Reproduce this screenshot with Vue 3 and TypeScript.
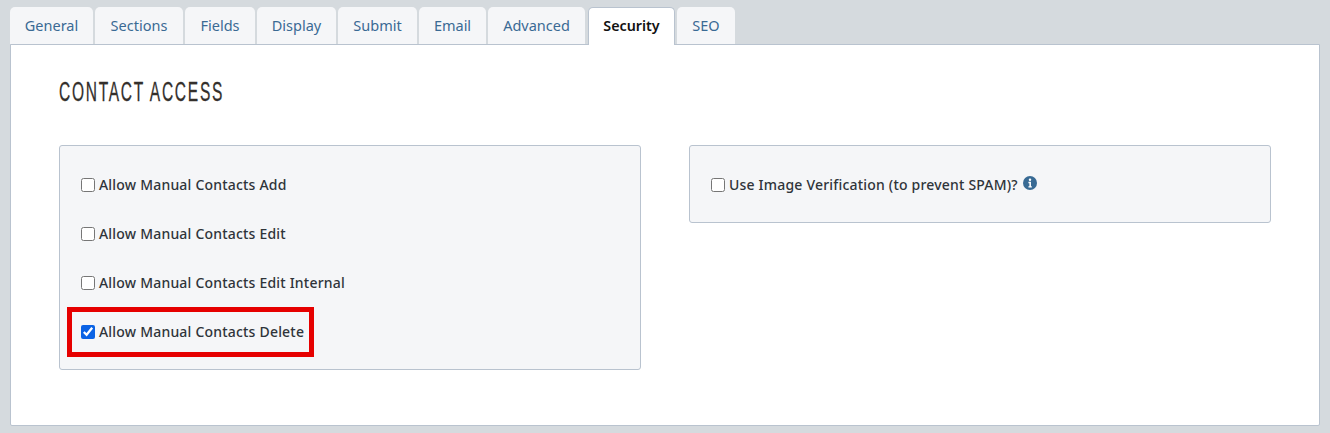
<script setup lang="ts">
const tabs = ['General', 'Sections', 'Fields', 'Display', 'Submit', 'Email', 'Advanced', 'Security', 'SEO']
const activeTab = 'Security'

const contactRules = [
  { label: 'Allow Manual Contacts Add', checked: false },
  { label: 'Allow Manual Contacts Edit', checked: false },
  { label: 'Allow Manual Contacts Edit Internal', checked: false },
  { label: 'Allow Manual Contacts Delete', checked: true, marked: true },
]
</script>

<template>
  <div class="page">
    <ul class="tabs">
      <li v-for="tab in tabs" :key="tab" class="tab" :class="{ active: tab === activeTab }">{{ tab }}</li>
    </ul>
    <main class="panel">
      <h2 class="title"><span>CONTACT ACCESS</span></h2>
      <div class="columns">
        <section class="box">
          <label v-for="rule in contactRules" :key="rule.label" class="row">
            <input type="checkbox" :checked="rule.checked" />
            <span>{{ rule.label }}</span>
            <i v-if="rule.marked" class="marker"></i>
          </label>
        </section>
        <section class="box short">
          <label class="row">
            <input type="checkbox" />
            <span>Use Image Verification (to prevent SPAM)?</span>
            <svg class="info" viewBox="0 0 16 16" width="14" height="14">
              <circle cx="8" cy="8" r="8" fill="#386a94" />
              <circle cx="8" cy="4.3" r="1.4" fill="#fff" />
              <path d="M6.2 6.7h2.9v5h1v1.5H6.2v-1.5h1.1V8.2H6.2z" fill="#fff" />
            </svg>
          </label>
        </section>
      </div>
    </main>
  </div>
</template>

<style>
html,
body {
  margin: 0;
  background: #d5dade;
}
</style>

<style scoped>
.page {
  height: 433px;
  box-sizing: border-box;
  padding: 7px 10px 0;
  font-family: 'Noto Sans', 'Open Sans', sans-serif;
  overflow: hidden;
}

.tabs {
  display: grid;
  grid-template-columns: 83px 88px 70px 79px 79px 67px 97px 88px 58px;
  gap: 2px;
  list-style: none;
  margin: 0;
  padding: 0;
  height: 37px;
}

.tab {
  box-sizing: border-box;
  height: 37px;
  line-height: 37px;
  text-align: center;
  font-size: 14.5px;
  color: #3a6a94;
  background: #f5f6f8;
  border-radius: 5px 5px 0 0;
}

.tab.active {
  position: relative;
  z-index: 1;
  height: 38px;
  line-height: 36px;
  margin-left: 1px;
  font-size: 14.3px;
  color: #111;
  font-weight: 600;
  background: #fff;
  border: 1px solid #b9c3cf;
  border-bottom: 0;
}

.panel {
  box-sizing: border-box;
  width: 1310px;
  height: 382px;
  padding: 0 48px;
  background: #fff;
  border: 1px solid #b9c3cf;
  border-radius: 0 0 2px 2px;
}

.title {
  margin: 0;
  padding: 32px 0 37px;
  height: 100px;
  box-sizing: border-box;
  font-family: 'Liberation Sans', sans-serif;
  font-size: 27px;
  line-height: 31px;
  font-weight: 400;
  color: #332f2c;
  -webkit-text-stroke: 0.3px #332f2c;
}

.title span {
  display: inline-block;
  letter-spacing: 3px;
  transform: scaleX(0.575);
  transform-origin: left center;
}

.columns {
  display: flex;
  align-items: flex-start;
  gap: 48px;
}

.box {
  flex: 1;
  box-sizing: border-box;
  height: 225px;
  padding: 14px 21px 13px;
  background: #f5f6f8;
  border: 1px solid #b9c3cf;
  border-radius: 3px;
}

.box.short {
  height: 78px;
}

.row {
  position: relative;
  display: flex;
  align-items: center;
  height: 49px;
  font-size: 14px;
  font-weight: 500;
  letter-spacing: 0.2px;
  color: #2f343a;
}

.row input {
  width: 14px;
  height: 14px;
  margin: 0 4px 0 0;
  accent-color: #0b63e5;
}

.info {
  margin: -3px 0 0 5px;
}

.marker {
  position: absolute;
  left: -14px;
  top: 0;
  width: 247px;
  height: 50px;
  box-sizing: border-box;
  border: 5px solid #e60000;
  pointer-events: none;
}
</style>
